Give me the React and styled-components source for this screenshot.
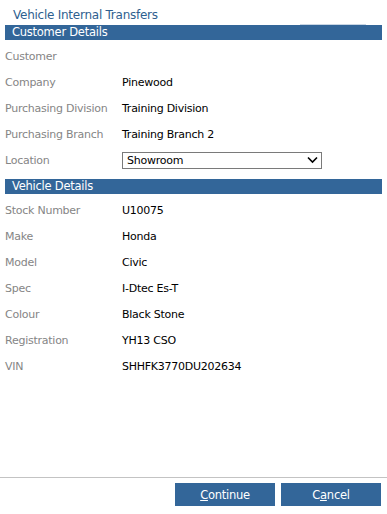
import React from "react";
import styled, { createGlobalStyle } from "styled-components";

const Global = createGlobalStyle`
  html, body { margin: 0; padding: 0; background: #fff; }
  body { font-family: "DejaVu Sans", Verdana, sans-serif; font-size: 11px; letter-spacing: -0.25px; }
`;

const Page = styled.div`
  width: 387px;
  height: 514px;
  display: flex;
  flex-direction: column;
  box-sizing: border-box;
`;

const Content = styled.div`
  flex: 1;
  padding: 0 5px;
`;

const Title = styled.div`
  height: 25px;
  line-height: 31px;
  padding-left: 8px;
  color: #2f5f8f;
  font-size: 12px;
  position: relative;
`;

const TabHint = styled.div`
  position: absolute;
  left: 295px;
  width: 66px;
  bottom: 0;
  height: 1px;
  background: #c9d6e4;
`;

const SectionBar = styled.div`
  height: 15px;
  line-height: 15px;
  background: #336699;
  color: #fff;
  font-size: 11.5px;
  padding-left: 7px;
  margin-bottom: 3px;
`;

const Rows = styled.div`
  margin-bottom: 6px;
`;

const Row = styled.div`
  display: grid;
  grid-template-columns: 117px 1fr;
  align-items: center;
  height: 26px;
`;

const Label = styled.div`
  color: #858585;
`;

const Value = styled.div`
  color: #000;
`;

const SelectBox = styled.div`
  width: 200px;
  height: 17px;
  box-sizing: border-box;
  border: 1px solid #7a7a7a;
  display: flex;
  align-items: center;
  justify-content: space-between;
  padding: 0 3px 0 4px;
  color: #000;
`;

const Footer = styled.div`
  border-top: 1px solid #c3c3c3;
  display: flex;
  justify-content: flex-end;
  gap: 6px;
  padding: 5px 6px 8px 0;
`;

const Button = styled.button`
  width: 100px;
  height: 23px;
  background: #336699;
  border: none;
  color: #fff;
  font-family: "DejaVu Sans", Verdana, sans-serif;
  font-size: 11.5px;
  letter-spacing: -0.25px;
  padding: 0;
  u { text-decoration: underline; }
`;

const customer = [
  ["Customer", ""],
  ["Company", "Pinewood"],
  ["Purchasing Division", "Training Division"],
  ["Purchasing Branch", "Training Branch 2"],
];

const vehicle = [
  ["Stock Number", "U10075"],
  ["Make", "Honda"],
  ["Model", "Civic"],
  ["Spec", "I-Dtec Es-T"],
  ["Colour", "Black Stone"],
  ["Registration", "YH13 CSO"],
  ["VIN", "SHHFK3770DU202634"],
];

const Chevron = () => (
  <svg width="11" height="8" viewBox="0 0 11 8">
    <path d="M1 1.5 L5.5 6 L10 1.5" fill="none" stroke="#000" strokeWidth="1.6" />
  </svg>
);

export default function App() {
  return (
    <Page>
      <Global />
      <Content>
        <Title>
          Vehicle Internal Transfers
          <TabHint />
        </Title>
        <SectionBar>Customer Details</SectionBar>
        <Rows>
          {customer.map(([l, v]) => (
            <Row key={l}>
              <Label>{l}</Label>
              <Value>{v}</Value>
            </Row>
          ))}
          <Row>
            <Label>Location</Label>
            <SelectBox>
              <span>Showroom</span>
              <Chevron />
            </SelectBox>
          </Row>
        </Rows>
        <SectionBar>Vehicle Details</SectionBar>
        <Rows>
          {vehicle.map(([l, v]) => (
            <Row key={l}>
              <Label>{l}</Label>
              <Value>{v}</Value>
            </Row>
          ))}
        </Rows>
      </Content>
      <Footer>
        <Button>
          <u>C</u>ontinue
        </Button>
        <Button>
          C<u>a</u>ncel
        </Button>
      </Footer>
    </Page>
  );
}
